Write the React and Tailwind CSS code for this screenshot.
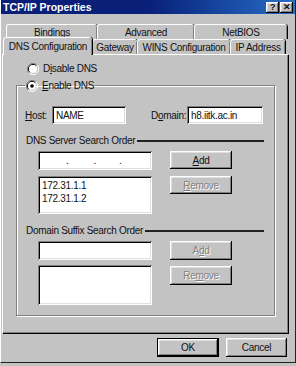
import React from 'react';

const raised =
  'bg-[#c3c3c3] shadow-[inset_-1px_-1px_#000,inset_1px_1px_#fff,inset_-2px_-2px_#808080,inset_2px_2px_#dfdfdf]';
const sunken =
  'bg-white shadow-[inset_1px_1px_#808080,inset_-1px_-1px_#fff,inset_2px_2px_#000,inset_-2px_-2px_#dfdfdf]';

function Radio({ checked }) {
  return (
    <svg width="12" height="12" viewBox="0 0 12 12" className="shrink-0">
      <path d="M10 2 A5.5 5.5 0 0 0 2 10" stroke="#808080" strokeWidth="1" fill="none" />
      <path d="M9.2 2.8 A4.5 4.5 0 0 0 2.8 9.2" stroke="#000" strokeWidth="1" fill="none" />
      <circle cx="6" cy="6" r="4" fill="#fff" />
      <path d="M2 10 A5.5 5.5 0 0 0 10 2" stroke="#fff" strokeWidth="1" fill="none" />
      {checked && <circle cx="6" cy="6" r="1.8" fill="#000" />}
    </svg>
  );
}

function Tab({ label, w, selected }) {
  if (selected) {
    return (
      <div
        className={`relative z-10 -mt-[2px] -mb-[1px] -ml-[2px] flex h-[18px] items-center justify-center whitespace-nowrap rounded-t-[3px] border-l border-t border-white bg-[#c3c3c3] shadow-[inset_-1px_0_#808080,1px_0_#000] ${w}`}
      >
        {label}
      </div>
    );
  }
  return (
    <div
      className={`flex h-[15px] items-center justify-center whitespace-nowrap rounded-t-[3px] border-l border-t border-white shadow-[inset_-1px_0_#808080,1px_0_#000] ${w}`}
    >
      {label}
    </div>
  );
}

function Button({ children, w = 'w-[62px]', h = 'h-[18px]', disabled, extra = '' }) {
  return (
    <div
      className={`flex items-center justify-center ${raised} ${w} ${h} ${extra} ${
        disabled ? 'text-[#808080] [text-shadow:1px_1px_#fff]' : ''
      }`}
    >
      {children}
    </div>
  );
}

function Heading({ children }) {
  return (
    <div className="flex h-[13px] items-center pl-[9px] pr-[10px]">
      <span className="whitespace-nowrap">{children}</span>
      <div className="ml-[2px] h-[2px] flex-1 bg-[#222]" />
    </div>
  );
}

export default function App() {
  return (
    <div className="h-[366px] w-[296px] overflow-hidden bg-[#c3c3c3] font-['Liberation_Sans',Arial,sans-serif] text-[10px] leading-[13px] tracking-[-0.3px] text-[#111]">
      <div className="flex h-[363px] flex-col border-b border-r border-l border-[#222] border-l-white">
        {/* title bar */}
        <div className="flex h-[14px] items-center justify-between bg-gradient-to-r from-[#0a1f78] from-50% to-[#2a6ec8] pl-[2px] pr-[2px]">
          <span className="text-[10.5px] font-bold tracking-[0px] text-white">TCP/IP Properties</span>
          <div className="flex gap-[1px]">
            <div className={`flex h-[11px] w-[13px] items-center justify-center text-[9px] font-bold leading-none ${raised}`}>?</div>
            <div className={`flex h-[11px] w-[13px] items-center justify-center text-[9px] font-bold leading-none ${raised}`}>✕</div>
          </div>
        </div>

        {/* tabs */}
        <div className="mt-[10px] flex pl-[5px]">
          <Tab label="Bindings" w="w-[91px]" />
          <Tab label="Advanced" w="w-[97px]" />
          <Tab label="NetBIOS" w="w-[93px]" />
        </div>
        <div className="flex pl-[4px]">
          <Tab label="DNS Configuration" w="w-[89px]" selected />
          <Tab label="Gateway" w="w-[45px]" />
          <Tab label="WINS Configuration" w="w-[93px]" />
          <Tab label="IP Address" w="w-[55px]" />
        </div>

        {/* panel */}
        <div className="ml-[1px] flex h-[279px] w-[286px] flex-col border-l border-t border-white shadow-[inset_-1px_-1px_#808080,1px_1px_#000]">
          <div className="ml-[24px] mt-[7px] flex h-[13px] items-center gap-[4px]">
            <Radio />
            <span>
              D<u>i</u>sable DNS
            </span>
          </div>

          <fieldset className="ml-[13px] mt-[4px] w-[259px] border border-[#808080] pb-[10px] shadow-[inset_1px_1px_#fff,1px_1px_#fff]">
            <legend className="ml-[8px] flex h-[13px] items-center gap-[4px] px-[1px]">
              <Radio checked />
              <span>
                <u>E</u>nable DNS
              </span>
            </legend>

            <div className="mt-[14px] flex h-[18px] items-center pl-[8px]">
              <span className="w-[27px]">
                <u>H</u>ost:
              </span>
              <div className={`flex h-[18px] w-[74px] items-center pl-[4px] ${sunken}`}>NAME</div>
              <span className="ml-[25px] w-[36px]">
                D<u>o</u>main:
              </span>
              <div className={`flex h-[18px] w-[76px] items-center pl-[4px] ${sunken}`}>h8.iitk.ac.in</div>
            </div>

            <div className="mt-[10px]">
              <Heading>DNS Server Search Order</Heading>
            </div>
            <div className="mt-[4px] flex pl-[21px]">
              <div className={`flex h-[19px] w-[114px] items-center ${sunken}`}>
                <span className="ml-[28px]">.</span>
                <span className="ml-[25px]">.</span>
                <span className="ml-[23px]">.</span>
              </div>
              <Button extra="ml-[18px]">
                <u>A</u>dd
              </Button>
            </div>
            <div className="mt-[6px] flex items-start pl-[21px]">
              <div className={`h-[38px] w-[114px] px-[4px] pt-[3px] leading-[13px] ${sunken}`}>
                <div>172.31.1.1</div>
                <div>172.31.1.2</div>
              </div>
              <Button extra="ml-[18px]" disabled>
                <u>R</u>emove
              </Button>
            </div>

            <div className="mt-[10px]">
              <Heading>Domain Suffix Search Order</Heading>
            </div>
            <div className="mt-[4px] flex pl-[21px]">
              <div className={`h-[19px] w-[114px] ${sunken}`} />
              <Button extra="ml-[18px]" h="h-[19px]" disabled>
                A<u>d</u>d
              </Button>
            </div>
            <div className="mt-[5px] flex items-start pl-[21px]">
              <div className={`h-[40px] w-[114px] ${sunken}`} />
              <Button extra="ml-[18px] mt-[1px]" h="h-[19px]" disabled>
                Re<u>m</u>ove
              </Button>
            </div>
          </fieldset>
        </div>

        {/* dialog buttons */}
        <div className="mt-[5px] flex pl-[156px]">
          <div className="h-[19px] w-[62px] border border-black">
            <Button w="w-full" h="h-full">OK</Button>
          </div>
          <Button extra="ml-[7px]" w="w-[61px]" h="h-[19px]">
            Cancel
          </Button>
        </div>
      </div>
    </div>
  );
}
